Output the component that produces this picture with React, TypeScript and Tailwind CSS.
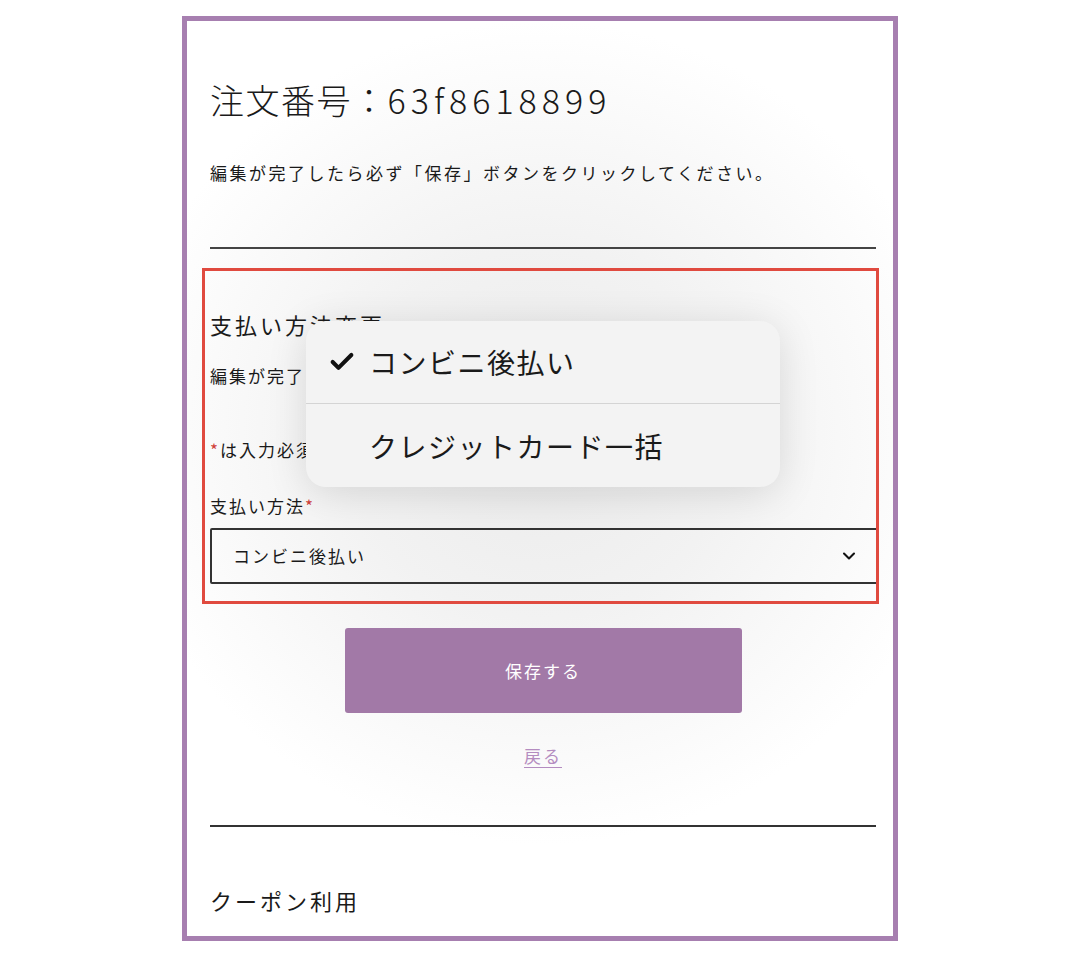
import { Check, ChevronDown } from "lucide-react";

const font = { fontFamily: '"Noto Sans CJK JP", "Noto Sans", sans-serif' };

function PaymentPopup() {
  return (
    <div className="absolute left-[119px] top-[300px] w-[474px] h-[166px] rounded-[20px] bg-[#f3f3f3] shadow-[0_6px_40px_rgba(0,0,0,0.12)] overflow-hidden">
      <div className="h-[83px] flex items-center pl-[22px] border-b border-[#d4d4d4]">
        <Check className="w-[28px] h-[28px] text-[#111]" strokeWidth={3.5} />
        <span className="ml-[13px] text-[28px] text-[#1a1a1a] tracking-[1.5px]">コンビニ後払い</span>
      </div>
      <div className="h-[83px] flex items-center pl-[63px]">
        <span className="text-[28px] text-[#1a1a1a] tracking-[1.5px]">クレジットカード一括</span>
      </div>
    </div>
  );
}

export default function App() {
  return (
    <div className="min-h-[965px] bg-white pt-[16px]" style={font}>
      <div className="relative ml-[182px] w-[716px] h-[925px] border-[5px] border-[#a77fb0] overflow-hidden bg-[radial-gradient(ellipse_60%_45%_at_50%_45%,#ebebeb_0%,#f2f2f2_45%,#ffffff_100%)]">
        <div className="pl-[23px] pr-[17px] pt-[59px] text-[#1a1a1a]">
          <h1 className="text-[34px] leading-[40px] font-light tracking-[1.5px]">
            注文番号：<span className="tracking-[5px]">63f8618899</span>
          </h1>
          <p className="mt-[41px] text-[17px] leading-[24px] tracking-[2.5px]">
            編集が完了したら必ず「保存」ボタンをクリックしてください。
          </p>
          <div className="mt-[62px] h-[2px] bg-[#444]" />

          <div className="mt-[19px] -ml-[8px] -mr-[3px] border-[3px] border-[#e04a3f] pl-[5px] pb-[17px] overflow-hidden">
            <h2 className="pt-[38px] text-[22px] leading-[30px] tracking-[3px]">支払い方法変更</h2>
            <p className="mt-[25px] text-[17px] leading-[24px] tracking-[2px]">
              編集が完了したら必ず「保存」ボタンをクリックしてください。
            </p>
            <p className="mt-[50px] text-[17px] leading-[24px] tracking-[2px]">
              <span className="text-[#d0413a]">*</span>は入力必須項目です。
            </p>
            <p className="mt-[32px] text-[17px] leading-[24px] tracking-[2px]">
              支払い方法<span className="text-[#d0413a]">*</span>
            </p>
            <div className="mt-[10px] w-[calc(100%+3px)] h-[56px] border-2 border-[#333] rounded-[2px] flex items-center justify-between pl-[21px] pr-[18px]">
              <span className="text-[17px] tracking-[2px]">コンビニ後払い</span>
              <ChevronDown className="w-[20px] h-[20px] text-[#111]" strokeWidth={2.5} />
            </div>
          </div>

          <div className="flex justify-center mt-[24px]">
            <button className="w-[397px] h-[85px] bg-[#a279a7] rounded-[3px] text-white text-[17px] tracking-[2px]">
              保存する
            </button>
          </div>
          <div className="mt-[31px] text-center">
            <a className="text-[17px] leading-[24px] tracking-[2px] text-[#b48cc0] underline underline-offset-4">戻る</a>
          </div>
          <div className="mt-[57px] h-[2px] bg-[#333]" />
          <h2 className="mt-[58px] text-[22px] leading-[30px] tracking-[3px]">クーポン利用</h2>
        </div>
        <PaymentPopup />
      </div>
    </div>
  );
}
